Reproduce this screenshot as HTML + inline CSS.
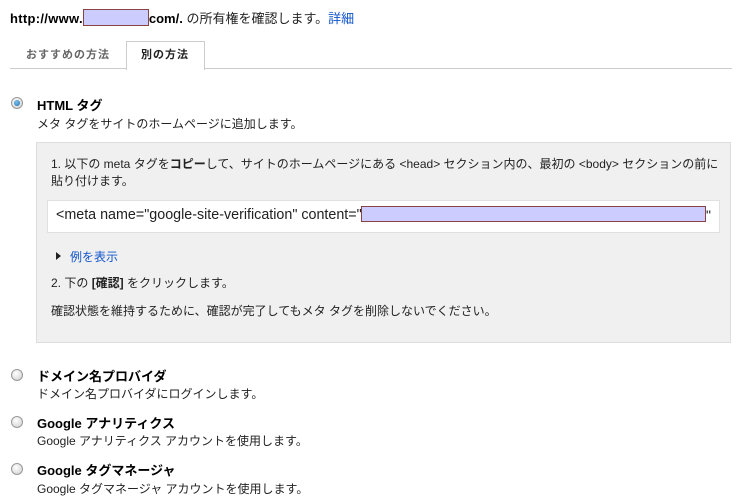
<!DOCTYPE html>
<html><head><meta charset="utf-8"><style>
body{margin:0;width:738px;height:501px;background:#fff;font-family:"Liberation Sans","Noto Sans CJK JP",sans-serif;font-size:12px;color:#222;position:relative;overflow:hidden}
.a{position:absolute;white-space:nowrap}
.b{font-weight:bold;font-size:13px;color:#000}
.radio{position:absolute;width:10px;height:10px;border-radius:50%;border:1px solid #999;background:radial-gradient(circle at 40% 35%,#fff,#ccc)}
.radio.on::after{content:"";position:absolute;left:2px;top:2px;width:6px;height:6px;border-radius:50%;background:radial-gradient(circle at 40% 35%,#7cc4f0,#1a6db0)}
a{color:#1155cc;text-decoration:none}
</style></head><body>
<div class="a" style="left:10px;top:8px;font-size:13px"><b style="color:#000;letter-spacing:0.3px">http://www.</b><span style="display:inline-block;width:64px;height:15px;background:#ccf;border:1px solid #844;vertical-align:-3px"></span><b style="color:#000">com/.</b> の所有権を確認します。<a>詳細</a></div>
<div class="a" style="left:10px;top:68px;width:722px;height:1px;background:#ccc"></div>
<div class="a" style="left:26px;top:46px;font-size:11px;font-weight:bold;color:#666;letter-spacing:1px">おすすめの方法</div>
<div class="a" style="left:126px;top:41px;width:77px;height:28px;border:1px solid #ccc;border-bottom:none;background:#fff"></div>
<div class="a" style="left:141px;top:46px;font-size:11px;font-weight:bold;color:#222;letter-spacing:1px">別の方法</div>

<div class="radio on" style="left:11px;top:97px"></div>
<div class="a b" style="left:37px;top:95px">HTML タグ</div>
<div class="a" style="left:37px;top:115px">メタ タグをサイトのホームページに追加します。</div>

<div class="a" style="left:36px;top:142px;width:695px;height:201px;background:#f0f0f0;border:1px solid #ddd;box-sizing:border-box"></div>
<div class="a" style="left:51px;top:155px">1. 以下の meta タグを<b>コピー</b>して、サイトのホームページにある &lt;head&gt; セクション内の、最初の &lt;body&gt; セクションの前に</div>
<div class="a" style="left:51px;top:172px">貼り付けます。</div>
<div class="a" style="left:47px;top:200px;width:673px;height:33px;background:#fff;border:1px solid #e0e0e0;box-sizing:border-box"></div>
<div class="a" style="left:56px;top:207px;font-size:14.3px">&lt;meta name="google-site-verification" content="</div>
<div class="a" style="left:361px;top:206px;width:343px;height:14px;background:#ccf;border:1px solid #844"></div>
<div class="a" style="left:706px;top:207px;font-size:14px">"</div>
<div class="a" style="left:56px;top:252px;width:0;height:0;border-left:5px solid #222;border-top:4px solid transparent;border-bottom:4px solid transparent"></div>
<div class="a" style="left:70px;top:248px"><a>例を表示</a></div>
<div class="a" style="left:51px;top:274px">2. 下の <b>[確認]</b> をクリックします。</div>
<div class="a" style="left:51px;top:302px">確認状態を維持するために、確認が完了してもメタ タグを削除しないでください。</div>

<div class="radio" style="left:11px;top:369px"></div>
<div class="a b" style="left:37px;top:366px">ドメイン名プロバイダ</div>
<div class="a" style="left:37px;top:385px">ドメイン名プロバイダにログインします。</div>
<div class="radio" style="left:11px;top:416px"></div>
<div class="a b" style="left:37px;top:413px">Google アナリティクス</div>
<div class="a" style="left:37px;top:432px">Google アナリティクス アカウントを使用します。</div>
<div class="radio" style="left:11px;top:463px"></div>
<div class="a b" style="left:37px;top:460px">Google タグマネージャ</div>
<div class="a" style="left:37px;top:480px">Google タグマネージャ アカウントを使用します。</div>
</body></html>
